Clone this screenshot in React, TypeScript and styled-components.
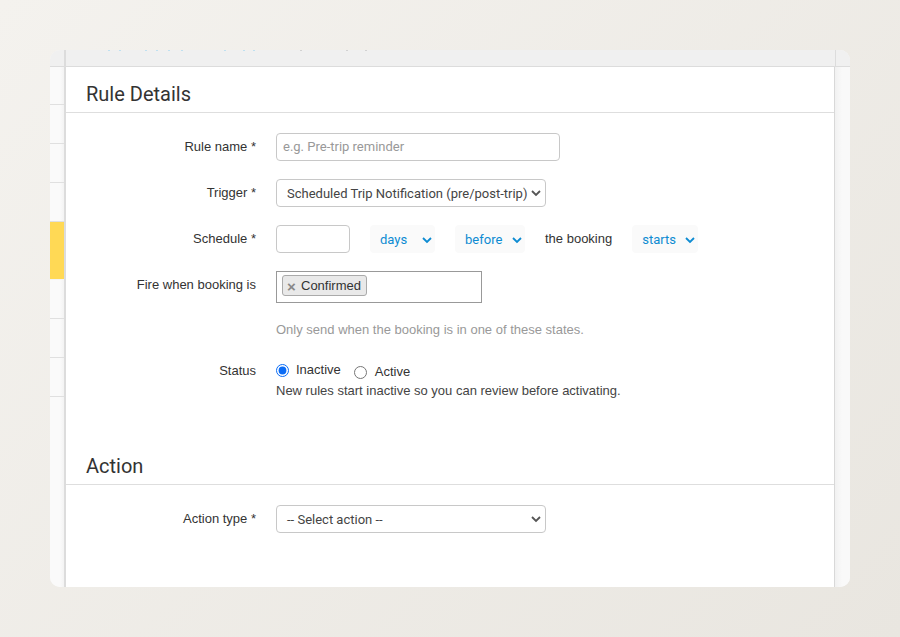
import React from "react";
import styled, { createGlobalStyle } from "styled-components";

const GlobalStyle = createGlobalStyle`
  html, body {
    margin: 0;
    height: 100%;
  }
  body {
    font-family: "Liberation Sans", Arial, sans-serif;
    font-size: 13px;
    color: #333;
  }
`;

const Page = styled.div`
  box-sizing: border-box;
  width: 900px;
  height: 637px;
  padding: 50px;
  background: linear-gradient(135deg, #f4f2ee 0%, #e9e6e0 100%);
  overflow: hidden;
`;

const AppWindow = styled.div`
  display: grid;
  grid-template-columns: 14px 1fr 15px;
  grid-template-rows: 17px 1fr;
  height: 537px;
  border-radius: 10px;
  overflow: hidden;
  background: #f8f8f8;
`;

const TopBar = styled.div`
  grid-column: 1 / -1;
  background: #f0f0f0;
  border-bottom: 1px solid #dcdcdc;
  display: grid;
  grid-template-columns: 14px 1fr 15px;
`;

const TopDivider = styled.div<{ $width: number }>`
  border-left: ${(p) => p.$width}px solid #dcdcdc;
`;

const ClippedText = styled.svg`
  display: block;
  width: 100%;
  height: 1px;
`;

const LeftRail = styled.div`
  display: flex;
  flex-direction: column;
  background: linear-gradient(90deg, #fafafa 0 10px, #f3f3f3 14px);
`;

const RailRow = styled.div<{ $height: number; $active?: boolean }>`
  box-sizing: border-box;
  height: ${(p) => p.$height}px;
  border-bottom: 1px solid ${(p) => (p.$active ? "#f4f4f4" : "#e0e0e0")};
  background: ${(p) => (p.$active ? "#ffd955" : "transparent")};
`;

const RightRail = styled.div`
  background: linear-gradient(90deg, #f1f1f1, #f9f9f9 7px);
`;

const Main = styled.main`
  background: #fff;
  border-left: 2px solid #dcdcdc;
  border-right: 1px solid #d8d8d8;
`;

const SectionTitle = styled.h2`
  box-sizing: border-box;
  margin: 0 0 20px;
  height: 46px;
  padding: 15px 20px 0;
  border-bottom: 1px solid #dedede;
  font-family: "Roboto", sans-serif;
  font-size: 20px;
  line-height: 24px;
  font-weight: 400;
  color: #333;
`;

const Form = styled.div`
  display: flex;
  flex-direction: column;
`;

const Field = styled.div<{ $height: number }>`
  display: grid;
  grid-template-columns: 190px 1fr;
  column-gap: 20px;
  height: ${(p) => p.$height}px;
`;

const Label = styled.label<{ $top?: number }>`
  text-align: right;
  line-height: 18px;
  padding-top: ${(p) => p.$top ?? 5}px;
  color: #333;
`;

const TextInput = styled.input<{ $width: number }>`
  box-sizing: border-box;
  width: ${(p) => p.$width}px;
  height: 28px;
  padding: 0 6px 2px;
  border: 1px solid #c8c8c8;
  border-radius: 4px;
  font: 13px "Roboto", sans-serif;
  color: #333;
  outline: none;
  &::placeholder {
    color: #999;
    opacity: 1;
  }
`;

const SelectBox = styled.div`
  box-sizing: border-box;
  display: flex;
  align-items: center;
  justify-content: space-between;
  width: 270px;
  height: 28px;
  padding: 0 3px 0 10px;
  border: 1px solid #c8c8c8;
  border-radius: 4px;
  font-family: "Roboto", sans-serif;
  color: #444;
`;

const ScheduleRow = styled.div`
  display: flex;
  align-items: flex-start;
`;

const InlineSelect = styled.div<{ $width: number; $gap: number }>`
  box-sizing: border-box;
  display: flex;
  align-items: center;
  justify-content: space-between;
  width: ${(p) => p.$width}px;
  height: 28px;
  margin-left: ${(p) => p.$gap}px;
  padding: 1px 2px 0 10px;
  border-radius: 4px;
  background: #fafafa;
  font-family: "Roboto", sans-serif;
  color: #0d8bd2;
`;

const InlineText = styled.span`
  margin-left: 20px;
  line-height: 28px;
  color: #333;
`;

const TagBox = styled.div`
  box-sizing: border-box;
  display: flex;
  align-items: flex-start;
  width: 206px;
  height: 32px;
  padding: 3px 5px;
  border: 1px solid #999;
`;

const Tag = styled.span`
  box-sizing: border-box;
  display: inline-flex;
  align-items: center;
  height: 21px;
  padding: 0 5px 0 4px;
  gap: 6px;
  border: 1px solid #aaa;
  border-radius: 3px;
  background: #e9e9e9;
  color: #333;
`;

const TagRemove = styled.span`
  width: 8px;
  padding-top: 2px;
  text-align: center;
  font-size: 15px;
  line-height: 15px;
  font-weight: 700;
  color: #888;
`;

const Hint = styled.p`
  margin: 18px 0 0;
  line-height: 18px;
  color: #999;
`;

const RadioRow = styled.div`
  display: flex;
  align-items: flex-start;
  height: 21px;
  margin-top: 3px;
`;

const RadioLabel = styled.label<{ $gap: number; $drop: number; $space: number }>`
  display: inline-flex;
  align-items: center;
  gap: ${(p) => p.$space}px;
  margin-left: ${(p) => p.$gap}px;
  margin-top: ${(p) => p.$drop}px;
  line-height: 18px;
  color: #333;
`;

const Radio = styled.input`
  width: 13px;
  height: 13px;
  margin: 0;
  accent-color: #0b6cf5;
`;

const StatusNote = styled.div`
  line-height: 18px;
  color: #444;
`;

const Chevron = ({ color, width = 1.8 }: { color: string; width?: number }) => (
  <svg width="12" height="12" viewBox="0 0 12 12" fill="none">
    <path d="M2 4l4 4 4-4" stroke={color} strokeWidth={width} />
  </svg>
);

// tips of the header text that scrolled out of view at the top of the window
const clippedTips = [
  { x: 42, color: "#bfe0f0" },
  { x: 53, color: "#bfe0f0" },
  { x: 79, color: "#bfe0f0" },
  { x: 90, color: "#bfe0f0" },
  { x: 102, color: "#bfe0f0" },
  { x: 115, color: "#bfe0f0" },
  { x: 158, color: "#bfe0f0" },
  { x: 177, color: "#bfe0f0" },
  { x: 187, color: "#bfe0f0" },
  { x: 234, color: "#d2d2d2" },
  { x: 280, color: "#d2d2d2" },
  { x: 299, color: "#d2d2d2" },
];

export default function App() {
  return (
    <Page>
      <GlobalStyle />
      <AppWindow>
        <TopBar>
          <div />
          <TopDivider $width={2}>
            <ClippedText viewBox="0 0 769 1" preserveAspectRatio="xMinYMin">
              {clippedTips.map((tip) => (
                <rect key={tip.x} x={tip.x} width="2" height="1" fill={tip.color} />
              ))}
            </ClippedText>
          </TopDivider>
          <TopDivider $width={1} />
        </TopBar>
        <LeftRail>
          <RailRow $height={38} />
          <RailRow $height={39} />
          <RailRow $height={39} />
          <RailRow $height={39} />
          <RailRow $height={58} $active />
          <RailRow $height={39} />
          <RailRow $height={39} />
          <RailRow $height={39} />
        </LeftRail>
        <Main>
          <SectionTitle>Rule Details</SectionTitle>
          <Form>
            <Field $height={46}>
              <Label>Rule name *</Label>
              <TextInput $width={284} placeholder="e.g. Pre-trip reminder" />
            </Field>
            <Field $height={46}>
              <Label>Trigger *</Label>
              <SelectBox>
                Scheduled Trip Notification (pre/post-trip)
                <Chevron color="#555" />
              </SelectBox>
            </Field>
            <Field $height={46}>
              <Label>Schedule *</Label>
              <ScheduleRow>
                <TextInput $width={74} />
                <InlineSelect $width={65} $gap={20}>
                  days
                  <Chevron color="#0d8bd2" />
                </InlineSelect>
                <InlineSelect $width={70} $gap={20}>
                  before
                  <Chevron color="#0d8bd2" />
                </InlineSelect>
                <InlineText>the booking</InlineText>
                <InlineSelect $width={66} $gap={20}>
                  starts
                  <Chevron color="#0d8bd2" />
                </InlineSelect>
              </ScheduleRow>
            </Field>
            <Field $height={87}>
              <Label>Fire when booking is</Label>
              <div>
                <TagBox>
                  <Tag>
                    <TagRemove>×</TagRemove>
                    Confirmed
                  </Tag>
                </TagBox>
                <Hint>Only send when the booking is in one of these states.</Hint>
              </div>
            </Field>
            <Field $height={81}>
              <Label $top={4}>Status</Label>
              <div>
                <RadioRow>
                  <RadioLabel $gap={0} $drop={0} $space={7}>
                    <Radio type="radio" name="status" defaultChecked />
                    Inactive
                  </RadioLabel>
                  <RadioLabel $gap={13} $drop={2} $space={8}>
                    <Radio type="radio" name="status" />
                    Active
                  </RadioLabel>
                </RadioRow>
                <StatusNote>New rules start inactive so you can review before activating.</StatusNote>
              </div>
            </Field>
          </Form>
          <SectionTitle>Action</SectionTitle>
          <Form>
            <Field $height={46}>
              <Label>Action type *</Label>
              <SelectBox>
                -- Select action --
                <Chevron color="#555" />
              </SelectBox>
            </Field>
          </Form>
        </Main>
        <RightRail />
      </AppWindow>
    </Page>
  );
}
